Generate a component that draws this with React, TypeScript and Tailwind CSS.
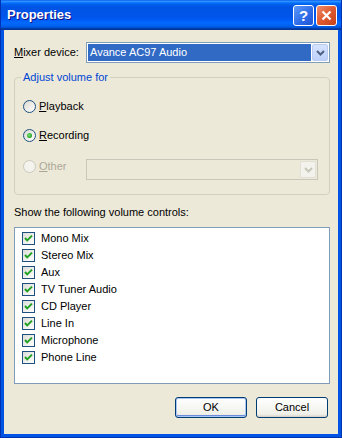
import React from "react";

const items = [
  "Mono Mix",
  "Stereo Mix",
  "Aux",
  "TV Tuner Audio",
  "CD Player",
  "Line In",
  "Microphone",
  "Phone Line",
];

const Chevron = ({ color }: { color: string }) => (
  <svg width="9" height="6" viewBox="0 0 9 6">
    <path d="M1 1 L4.5 4.5 L8 1" fill="none" stroke={color} strokeWidth="2" />
  </svg>
);

const Radio = ({ checked, disabled }: { checked?: boolean; disabled?: boolean }) => (
  <span
    className={
      disabled
        ? "w-[13px] h-[13px] rounded-full border border-[#CAC8BB] bg-[#F4F3EE] flex items-center justify-center shrink-0"
        : "w-[13px] h-[13px] rounded-full border border-[#1C5180] bg-[linear-gradient(135deg,#DCD9D0_0%,#FFFFFF_100%)] flex items-center justify-center shrink-0"
    }
  >
    {checked && (
      <span className="w-[5px] h-[5px] rounded-full bg-[radial-gradient(circle_at_40%_40%,#7DE27A_0%,#21A121_70%)]" />
    )}
  </span>
);

const Checkbox = () => (
  <span className="w-[13px] h-[13px] border border-[#1C5180] bg-[linear-gradient(135deg,#DCDCD7_0%,#FFFFFF_100%)] flex items-center justify-center shrink-0">
    <svg width="11" height="11" viewBox="0 0 11 11">
      <path d="M2 5 L4.2 7.4 L9 2.6" fill="none" stroke="#21A121" strokeWidth="2" />
    </svg>
  </span>
);

const XPButton = ({ label, focused }: { label: string; focused?: boolean }) => (
  <button
    className={
      focused
        ? "w-[72px] h-[21px] rounded-[3px] border border-[#003C74] bg-[linear-gradient(to_bottom,#FFFFFF_0%,#F0F0EA_85%,#D6D0C5_100%)] shadow-[inset_0_0_0_1px_#A9C6F5,inset_0_-1px_0_1px_#6A8CDA] text-[11px] text-black leading-none"
        : "w-[72px] h-[21px] rounded-[3px] border border-[#003C74] bg-[linear-gradient(to_bottom,#FFFFFF_0%,#F0F0EA_85%,#D6D0C5_100%)] text-[11px] text-black leading-none"
    }
  >
    {label}
  </button>
);

export default function App() {
  return (
    <div className="w-[342px] h-[438px] bg-[#0054E3] flex flex-col font-['Liberation_Sans',Arial,sans-serif] text-[11px] text-black select-none border-x border-b border-[#0032B4]">
      {/* TITLE BAR */}
      <div className="h-[30px] shrink-0 flex items-center justify-between pl-[6px] pr-[4px] bg-[linear-gradient(to_bottom,#0058EE_0%,#3593FF_4%,#288EFF_6%,#127DFF_8%,#036FFC_10%,#0262EE_14%,#0057E5_20%,#0054E3_24%,#0055EB_56%,#005BF5_66%,#026AFE_76%,#0062EF_86%,#0052D6_92%,#0040AB_94%,#003092_100%)]">
        <span className="text-white font-bold text-[13px] [text-shadow:1px_1px_#0F1089]">
          Properties
        </span>
        <div className="flex gap-[2px]">
          <div className="w-[21px] h-[21px] rounded-[3px] border border-white bg-[linear-gradient(135deg,#5E9AF8_0%,#2C6AE8_60%,#1F55D2_100%)] flex items-center justify-center">
            <span className="text-white font-bold text-[15px] leading-none">?</span>
          </div>
          <div className="w-[21px] h-[21px] rounded-[3px] border border-white bg-[linear-gradient(135deg,#EE8D6E_0%,#DF5A30_50%,#C7401A_100%)] flex items-center justify-center">
            <svg width="11" height="11" viewBox="0 0 11 11">
              <path d="M1.5 1.5 L9.5 9.5 M9.5 1.5 L1.5 9.5" stroke="#FFFFFF" strokeWidth="2.2" />
            </svg>
          </div>
        </div>
      </div>

      {/* BODY */}
      <div className="flex-1 mx-[3px] mb-[3px] bg-[#ECE9D8] pt-[12px] pl-[10px] pr-[8px] flex flex-col">
        {/* MIXER DEVICE */}
        <div className="flex items-center h-[21px]">
          <span className="w-[72px]">
            <span className="underline">M</span>ixer device:
          </span>
          <div className="flex-1 h-[21px] border border-[#7F9DB9] bg-white p-[1px] flex gap-[1px]">
            <div className="flex-1 bg-[#316AC5] text-white flex items-center pl-[2px]">
              Avance AC97 Audio
            </div>
            <div className="w-[16px] rounded-[2px] border border-[#B9CBF3] bg-[linear-gradient(to_bottom,#D6E3FE_0%,#BCD0FA_100%)] flex items-center justify-center">
              <Chevron color="#4D6185" />
            </div>
          </div>
        </div>

        {/* ADJUST VOLUME FOR */}
        <div className="relative mt-[14px] border border-[#D0D0BF] rounded-[4px] pt-[21px] pb-[14px] pl-[8px] pr-[11px]">
          <span className="absolute left-[6px] top-[-7px] px-[2px] bg-[#ECE9D8] text-[#0046D5] leading-[13px]">
            Adjust volume for
          </span>
          <div className="flex items-center h-[14px] gap-[3px]">
            <Radio />
            <span>
              <span className="underline">P</span>layback
            </span>
          </div>
          <div className="flex items-center h-[14px] gap-[3px] mt-[15px]">
            <Radio checked />
            <span>
              <span className="underline">R</span>ecording
            </span>
          </div>
          <div className="flex items-start mt-[17px]">
            <div className="flex items-center h-[14px] gap-[3px] w-[63px] text-[#ACA899]">
              <Radio disabled />
              <span>
                <span className="underline">O</span>ther
              </span>
            </div>
            <div className="flex-1 h-[21px] border border-[#C9C7BA] bg-[#ECE9D8] p-[1px] flex justify-end">
              <div className="w-[16px] rounded-[2px] border border-[#E2E0D6] bg-[#F3F2EC] flex items-center justify-center">
                <Chevron color="#C9C7BA" />
              </div>
            </div>
          </div>
        </div>

        {/* VOLUME CONTROLS */}
        <div className="mt-[11px] leading-[13px]">Show the following volume controls:</div>
        <div className="mt-[8px] h-[157px] border border-[#7F9DB9] bg-white pt-[2px] pl-[7px]">
          {items.map((item) => (
            <div key={item} className="h-[17px] flex items-center gap-[6px]">
              <Checkbox />
              <span>{item}</span>
            </div>
          ))}
        </div>

        {/* ACTIONS */}
        <div className="mt-[13px] flex justify-end gap-[9px] pr-[2px]">
          <XPButton label="OK" focused />
          <XPButton label="Cancel" />
        </div>
      </div>
    </div>
  );
}
